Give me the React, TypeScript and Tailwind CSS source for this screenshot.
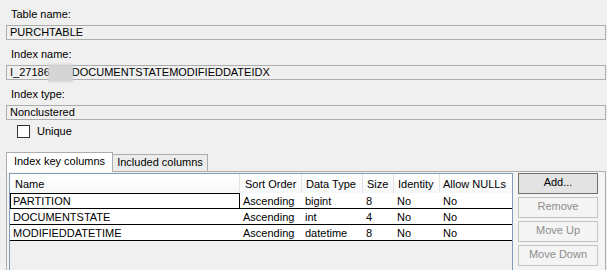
import { ReactNode } from 'react'

interface Column {
  title: string
  width: string
  pad: string
}

const columns: Column[] = [
  { title: 'Name', width: 'w-[230px]', pad: 'pl-[5px]' },
  { title: 'Sort Order', width: 'w-[62px]', pad: 'pl-[5px]' },
  { title: 'Data Type', width: 'w-[61px]', pad: 'pl-[4px]' },
  { title: 'Size', width: 'w-[31px]', pad: 'pl-[4px]' },
  { title: 'Identity', width: 'w-[46px]', pad: 'pl-[4px]' },
  { title: 'Allow NULLs', width: 'flex-1', pad: 'pl-[3px]' },
]

const rows = [
  ['PARTITION', 'Ascending', 'bigint', '8', 'No', 'No'],
  ['DOCUMENTSTATE', 'Ascending', 'int', '4', 'No', 'No'],
  ['MODIFIEDDATETIME', 'Ascending', 'datetime', '8', 'No', 'No'],
]

function Field({ label, children }: { label: string; children: ReactNode }) {
  return (
    <div>
      <div className="h-[25px] pt-[8px] pl-[5px] leading-[13px]">{label}</div>
      <div className="relative h-[15px] border border-[#adadad] pl-[3px] leading-[13px] whitespace-nowrap">
        {children}
      </div>
    </div>
  )
}

function Button({ label, disabled }: { label: string; disabled?: boolean }) {
  return (
    <div
      className={`h-[21px] w-[80px] border pt-[2px] text-center leading-[13px] ${
        disabled
          ? 'border-[#c4c4c4] bg-[#f4f4f4] text-[#8d8d8d]'
          : 'border-[#707070] bg-[#e3e3e3] text-black'
      }`}
    >
      {label}
    </div>
  )
}

export default function App() {
  return (
    <div
      className="flex h-[270px] w-[607px] flex-col overflow-hidden bg-[#f0f0f0] pl-[6px] text-[11px] text-black"
      style={{ fontFamily: '"Liberation Sans", Arial, sans-serif' }}
    >
      <div className="w-[600px]">
        <Field label="Table name:">PURCHTABLE</Field>
        <Field label="Index name:">
          I_27186<span className="inline-block w-[22px]" />DOCUMENTSTATEMODIFIEDDATEIDX
          {/* redacted part of the name */}
          <div className="absolute left-[41px] top-[-2px] h-[18px] w-[25px] bg-[#d4d4d4] blur-[1px]" />
        </Field>
        <Field label="Index type:">Nonclustered</Field>

        <div className="mt-[5px] flex h-[13px] items-center pl-[11px]">
          <div className="h-[13px] w-[13px] border border-[#333333] bg-white" />
          <span className="ml-[7px] leading-[13px]">Unique</span>
        </div>

        {/* Tabs */}
        <div className="mt-[14px] flex h-[19px] items-end">
          <div className="relative z-10 mb-[-1px] h-[20px] w-[107px] border border-b-0 border-[#acacac] bg-white pt-[2px] text-center leading-[13px]">
            Index key columns
          </div>
          <div className="h-[17px] w-[95px] border border-b-0 border-l-0 border-[#acacac] bg-[#ececec] pt-[1px] text-center leading-[13px]">
            Included columns
          </div>
        </div>

        <div className="flex h-[120px] gap-[5px] border border-b-0 border-[#acacac] bg-[#f4f4f4] pl-[2px] pt-[1px]">
          {/* Grid */}
          <div className="flex w-[504px] flex-col border border-[#7f9db9] bg-[#f0f0f0]">
            <div className="flex h-[19px] bg-gradient-to-b from-white to-[#f7f8f9]">
              {columns.map((c) => (
                <div
                  key={c.title}
                  className={`${c.width} ${c.pad} border-r border-[#e3e3e3] pt-[4px] leading-[13px] whitespace-nowrap last:border-r-0`}
                >
                  {c.title}
                </div>
              ))}
            </div>
            {rows.map((r, i) => (
              <div key={r[0]} className="flex h-[16px] border-b border-black bg-white">
                {r.map((cell, j) => (
                  <div
                    key={j}
                    className={`${columns[j].width} ${
                      i === 0 && j === 0 ? 'border-x border-t border-black pt-[1px] pl-[2px]' : 'pt-[2px] pl-[3px]'
                    } leading-[13px] whitespace-nowrap`}
                  >
                    {cell}
                  </div>
                ))}
              </div>
            ))}
          </div>

          {/* Buttons */}
          <div className="flex flex-col gap-[3px]">
            <Button label="Add..." />
            <Button label="Remove" disabled />
            <Button label="Move Up" disabled />
            <Button label="Move Down" disabled />
          </div>
        </div>
      </div>
    </div>
  )
}
